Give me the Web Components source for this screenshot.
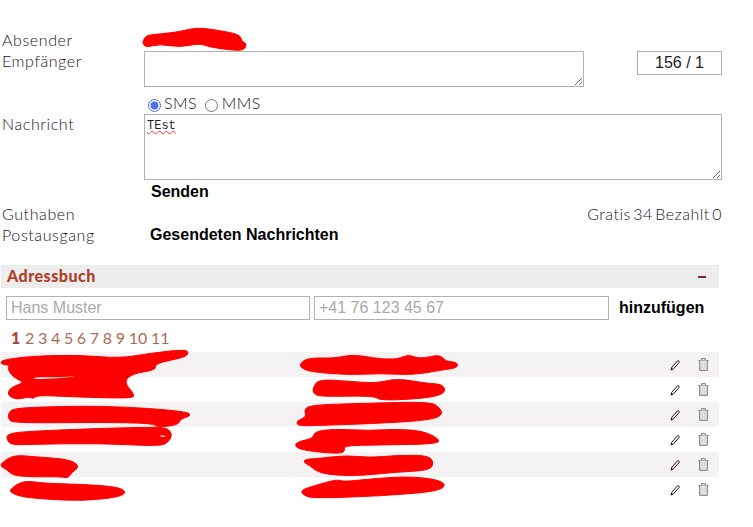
<!DOCTYPE html>
<html lang="de"><head><meta charset="utf-8"><title>SMS</title>
<style>
html,body{margin:0;background:#fff}
body{font-family:Lato,"Noto Sans",sans-serif;font-weight:300;color:#17131d;width:753px;height:527px;overflow:hidden}
</style></head><body>
<sms-page>
  <sms-form></sms-form>
  <address-book></address-book>
</sms-page>
<script>
const smooth=(pts)=>{
  let d='';const n=pts.length;
  for(let i=0;i<n;i++){
    const a=pts[i],b=pts[(i+1)%n],m=[(a[0]+b[0])/2,(a[1]+b[1])/2];
    if(i===0){const z=pts[n-1];d+=`M${((z[0]+a[0])/2).toFixed(1)} ${((z[1]+a[1])/2).toFixed(1)}`;}
    d+=`Q${a[0].toFixed(1)} ${a[1].toFixed(1)} ${m[0].toFixed(1)} ${m[1].toFixed(1)}`;
  }
  return d+'Z';
};
const scribble=(groups,ox,oy,cls='')=>groups.map(g=>`<path class="${cls}" d="${smooth(g.map(p=>[ox+p[0]/3,oy+p[1]/3]))}"/>`).join('');

class SmsPage extends HTMLElement{constructor(){super();this.attachShadow({mode:'open'}).innerHTML=`
<style>:host{display:block;position:relative;width:753px;height:527px;box-sizing:border-box;padding:30px 31px 0 1px}</style><slot></slot>`}}

class FieldRow extends HTMLElement{constructor(){super();this.attachShadow({mode:'open'}).innerHTML=`
<style>
:host{display:grid;grid-template-columns:143px 1fr;font-size:16px;line-height:20px;letter-spacing:.6px;word-spacing:-3px}
.l{padding-left:1px;transform:translateY(-.5px)}
</style><div class="l"><slot name="label"></slot></div><div><slot></slot></div>`}}

class TextBox extends HTMLElement{constructor(){super();this.attachShadow({mode:'open'}).innerHTML=`
<style>
:host{display:block;box-sizing:border-box;border:1px solid #b8aeb2;background:#fff;overflow:auto;resize:both;
font:12px/15px "Liberation Mono",monospace;color:#1c1c2c;padding:2px;letter-spacing:0;word-spacing:0}
</style><slot></slot>`}}

class SmsForm extends HTMLElement{constructor(){super();this.attachShadow({mode:'open'}).innerHTML=`
<style>
:host{display:block;position:relative}
.bold{font:bold 16px/20px "Liberation Sans",Arial,sans-serif;color:#000;letter-spacing:0;word-spacing:0}
.top{display:flex;justify-content:space-between;align-items:flex-start}
.counter{box-sizing:border-box;width:85px;height:24px;border:1px solid #b8aeb2;font:16px/22px "Liberation Sans",Arial,sans-serif;color:#222;text-align:center;letter-spacing:0;word-spacing:0}
.radios{display:flex;align-items:center;height:20px;letter-spacing:.4px}
.radios input{margin:4px 3px 0 4px;width:13px;height:13px;accent-color:#4f6ef7;flex:none}
.radios label{display:flex;align-items:center;margin-right:6px}
.radios label+label{margin-right:0}
.radios label+label input{margin:4px 4px 0 2px}
svg{position:absolute;left:-1px;top:-30px;pointer-events:none}
svg path{fill:#f00;stroke:#f00;stroke-width:1;stroke-linejoin:round}
.send{padding:1px 0 0 7px}
.credit{display:flex;justify-content:flex-end;letter-spacing:.5px;word-spacing:-2.4px}
.squig{text-decoration:underline wavy #e33 1px;text-underline-offset:1px;text-decoration-skip-ink:none}
.out{padding-left:6px}
.m1{margin-top:1px}.m6{margin-top:6px}
</style>
<field-row><span slot="label">Absender</span></field-row>
<field-row class="m1"><span slot="label">Empfänger</span>
  <div class="top"><text-box style="width:440px;height:36px"></text-box><div class="counter">156 / 1</div></div>
</field-row>
<field-row class="m6"><div class="radios"><label><input type="radio" name="t" checked>SMS</label><label><input type="radio" name="t">MMS</label></div></field-row>
<field-row class="m1"><span slot="label">Nachricht</span>
  <text-box style="width:578px;height:66px;padding-top:4px"><span class="squig">TEst</span></text-box>
</field-row>
<field-row class="m1"><div class="send bold">Senden</div></field-row>
<field-row style="margin-top:2px"><span slot="label">Guthaben</span><div class="credit">Gratis 34 Bezahlt 0</div></field-row>
<field-row class="m1"><span slot="label">Postausgang</span><div class="bold out">Gesendeten Nachrichten</div></field-row>
<svg width="753" height="120" viewBox="0 0 753 120">${scribble([[[430,60],[440,45],[480,42],[540,35],[590,22],[650,30],[720,43],[725,65],[740,70],[735,88],[710,92],[630,82],[600,70],[540,82],[480,72],[440,82],[428,72]]],0,20)}</svg>`}}

class AbRow extends HTMLElement{constructor(){super();this.attachShadow({mode:'open'}).innerHTML=`
<style>
:host{display:flex;height:25px;align-items:center;justify-content:flex-end;box-sizing:border-box;padding-right:10px;gap:18px}
:host(:nth-child(odd)){background:#f5f2f3}
svg{display:block}
</style>
<svg width="10" height="12" viewBox="0 0 10 12" fill="none"><path d="M1.2 10.8 1.8 8.2 7.3 2a1 1 0 0 1 1.4-.1l.3.3a1 1 0 0 1 0 1.4L3.5 9.8Z" stroke="#2a0f1e" stroke-width="1"/><path d="M.6 11.4 1.2 8.8 3 10.6Z" fill="#2a0f1e"/></svg>
<svg width="11" height="13" viewBox="0 0 11 13" fill="none" stroke="#77777a"><path d="M.5 2.5h10M3.5 2.5V.7h4v1.8"/><path d="M1.7 2.5v9.8h7.6V2.5" fill="#e6e6e6"/><path d="M4.2 4.5v6M6.8 4.5v6" stroke="#cfcfd1"/></svg>`}}

class AddressBook extends HTMLElement{constructor(){super();
const left=[
[[3,45],[100,33],[240,30],[360,40],[450,25],[555,13],[568,25],[550,38],[465,55],[468,75],[400,85],[370,110],[405,150],[395,160],[250,157],[110,150],[100,162],[85,155],[50,165],[22,150],[30,128],[75,112],[40,98],[22,70],[30,60],[3,58]],
[[25,205],[40,190],[150,185],[300,183],[450,190],[565,201],[572,213],[540,222],[535,240],[470,247],[460,235],[300,232],[40,234],[25,222]],
[[22,265],[100,258],[300,250],[470,246],[505,250],[517,270],[505,292],[480,304],[300,295],[100,298],[35,300],[20,285]],
[[3,355],[40,330],[100,335],[210,343],[240,365],[215,382],[205,400],[185,395],[100,396],[40,392],[22,375],[3,365]],
[[26,435],[70,406],[130,415],[250,418],[350,425],[380,440],[360,456],[250,468],[130,462],[70,456],[40,447]]];
const right=[
[[60,55],[85,38],[165,40],[220,28],[300,42],[355,42],[385,28],[420,42],[480,28],[497,50],[530,51],[535,68],[480,76],[400,90],[300,85],[200,90],[90,80],[62,68]],
[[98,130],[115,103],[200,108],[290,115],[350,100],[440,115],[490,118],[497,145],[440,160],[300,167],[283,152],[120,155],[100,145]],
[[72,195],[90,180],[250,175],[450,170],[480,188],[488,210],[450,225],[300,235],[100,242],[52,242],[50,228],[80,215]],
[[103,260],[160,252],[270,257],[350,252],[430,258],[480,283],[470,297],[300,300],[190,302],[196,318],[180,326],[100,320],[48,310],[46,292],[100,280]],
[[68,350],[80,342],[120,340],[200,331],[270,338],[350,331],[440,331],[462,348],[452,376],[350,381],[220,394],[120,386],[90,362]],
[[63,435],[110,420],[170,403],[190,410],[260,403],[380,394],[470,403],[500,420],[470,440],[300,453],[100,460],[68,450]]];
const slivers=[[[100,96],[170,97],[240,93],[170,100],[105,103]]];
const slivers2=[[[476,271],[495,272],[497,277],[482,275]]];
this.attachShadow({mode:'open'}).innerHTML=`
<style>
:host{display:block;position:relative;margin-top:20px;width:718px}
.head{display:flex;align-items:center;justify-content:space-between;height:23px;background:#eeeded;padding:0 13px 0 6px;font:900 16px/20px Lato,sans-serif;color:#b0402a;letter-spacing:.5px}
.head span:first-child{transform:translateY(-1px)}
.minus{width:8px;height:2px;background:#7c2a2a}
.add{display:flex;align-items:center;margin-top:8px;padding-left:5px;gap:4px}
.in{box-sizing:border-box;height:24px;border:1px solid #b8aeb2;font:16px/22px "Liberation Sans",Arial,sans-serif;color:#a9a9a9;padding:0 4px;white-space:nowrap}
.btn{font:bold 16px/20px "Liberation Sans",Arial,sans-serif;color:#000;margin-left:6px}
.pages{height:20px;margin-top:8px;padding-left:10px;font-size:16px;font-weight:400;line-height:20px;display:flex;gap:3.7px;color:#ad6a55}
.pages b{font-weight:900;color:#b0402a;margin-right:1px}
.rows{margin-top:4px}
svg{position:absolute;left:-1px;top:-265px;pointer-events:none}
svg path{fill:#f00;stroke:#f00;stroke-width:1;stroke-linejoin:round}
svg path.w{fill:#f9f0f2;stroke:none}
</style>
<div class="head"><span>Adressbuch</span><span class="minus"></span></div>
<div class="add"><div class="in" style="width:304px">Hans Muster</div><div class="in" style="width:295px">+41 76 123 45 67</div><div class="btn">hinzufügen</div></div>
<div class="pages"><b>1</b><span>2</span><span>3</span><span>4</span><span>5</span><span>6</span><span>7</span><span>8</span><span>9</span><span>10</span><span>11</span></div>
<div class="rows"><ab-row></ab-row><ab-row></ab-row><ab-row></ab-row><ab-row></ab-row><ab-row></ab-row><ab-row></ab-row></div>
<svg width="753" height="527" viewBox="0 0 753 527">${scribble(left,0,345)}${scribble(right,280,345)}${scribble(slivers,0,345,'w')}${scribble(slivers2,0,345,'w')}</svg>`}}

customElements.define('field-row',FieldRow);
customElements.define('text-box',TextBox);
customElements.define('ab-row',AbRow);
customElements.define('sms-form',SmsForm);
customElements.define('address-book',AddressBook);
customElements.define('sms-page',SmsPage);
</script>
</body></html>
